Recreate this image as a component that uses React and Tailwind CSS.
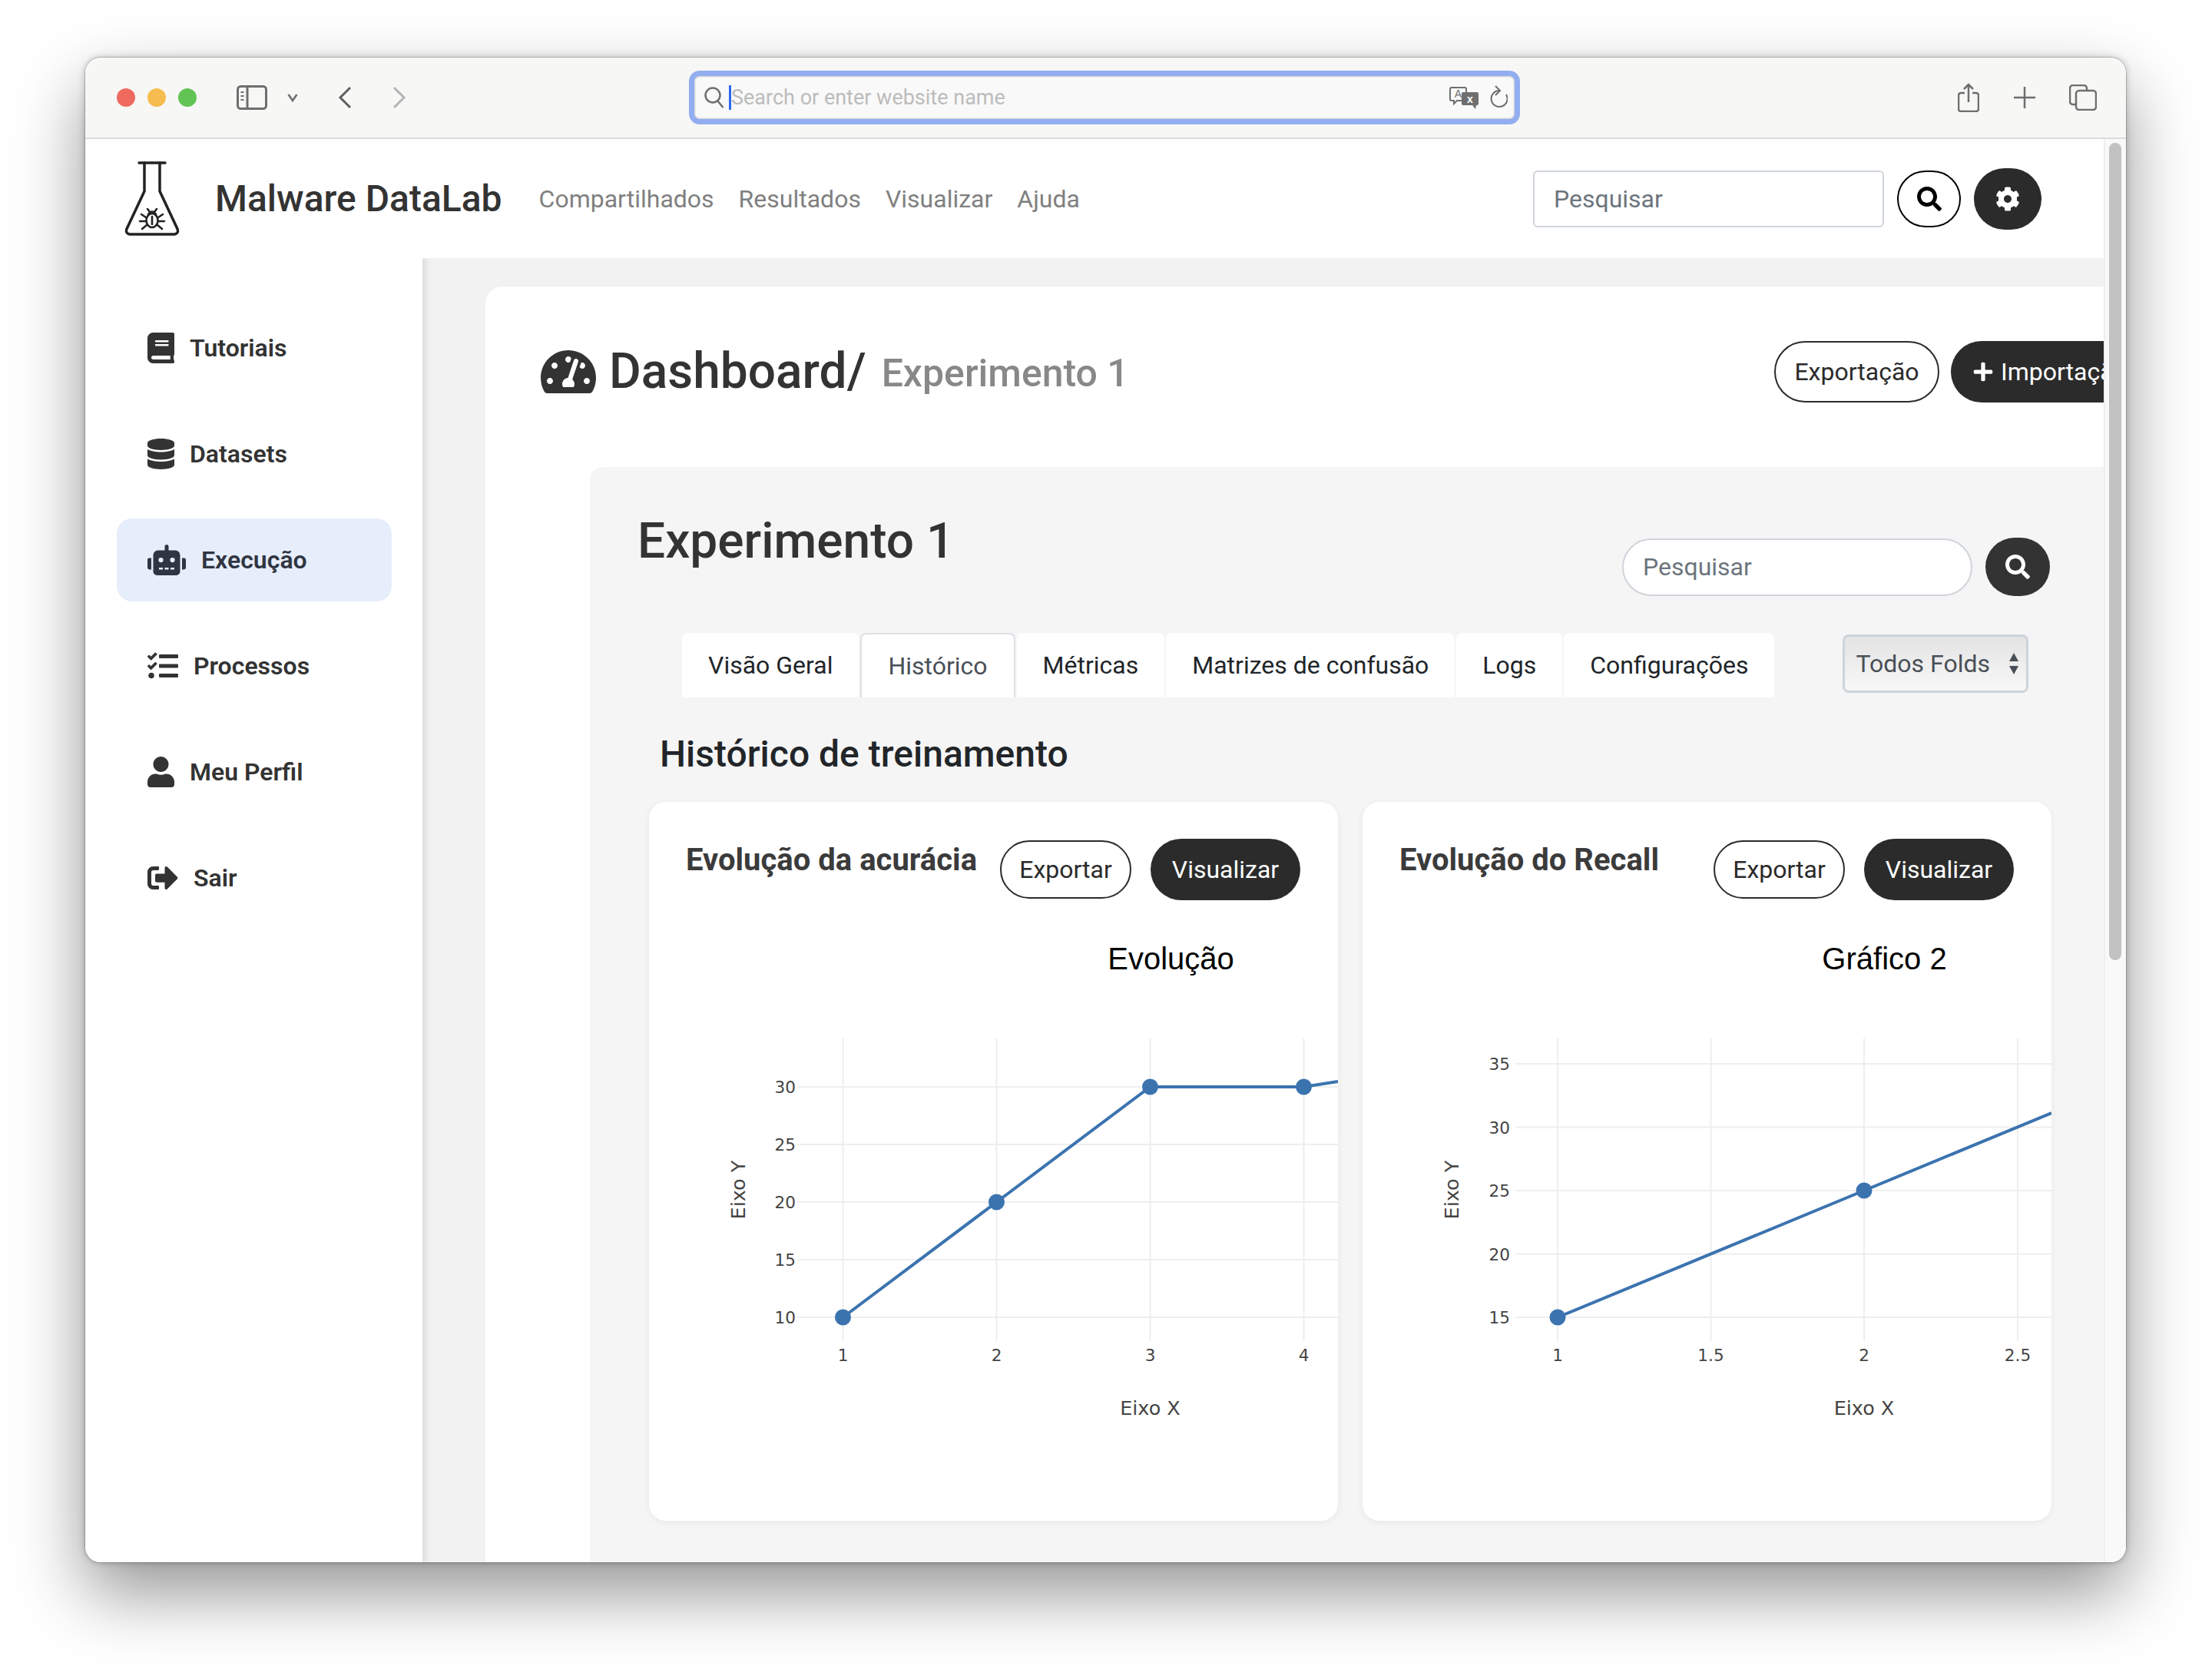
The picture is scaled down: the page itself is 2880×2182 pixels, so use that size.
import React from 'react';
import { FaBook, FaDatabase, FaRobot, FaTasks, FaUser, FaSignOutAlt, FaSearch, FaCog, FaTachometerAlt, FaPlus } from 'react-icons/fa';

const sideItems = [
  { label: 'Tutoriais', icon: FaBook, size: 'w-[35px] h-[40px]' },
  { label: 'Datasets', icon: FaDatabase, size: 'w-[35px] h-[40px]' },
  { label: 'Execução', icon: FaRobot, size: 'w-[50px] h-[40px]', active: true },
  { label: 'Processos', icon: FaTasks, size: 'w-[40px] h-[40px]' },
  { label: 'Meu Perfil', icon: FaUser, size: 'w-[35px] h-[40px]' },
  { label: 'Sair', icon: FaSignOutAlt, size: 'w-[40px] h-[40px]' },
];

const tabs = ['Visão Geral', 'Histórico', 'Métricas', 'Matrizes de confusão', 'Logs', 'Configurações'];

const chart1 = {
  title: 'Evolução',
  yLabelX: 191,
  axisYX: 117,
  gridLeft: 193,
  xs: [[252.5, '1'], [452.5, '2'], [652.5, '3'], [852.5, '4']],
  ys: [[243, '30'], [318, '25'], [393, '20'], [468, '15'], [543, '10']],
  line: '252.5,543 452.5,393 652.5,243 852.5,243 897,236',
  dots: [[252.5, 543], [452.5, 393], [652.5, 243], [852.5, 243]],
  axisX: 652.5,
};

const chart2 = {
  title: 'Gráfico 2',
  yLabelX: 192,
  axisYX: 117,
  gridLeft: 199,
  xs: [[254, '1'], [453.5, '1.5'], [653, '2'], [853, '2.5']],
  ys: [[213, '35'], [295.5, '30'], [378, '25'], [460.5, '20'], [543, '15']],
  line: '254,543 653,378 897,277',
  dots: [[254, 543], [653, 378]],
  axisX: 653,
};

function PlotChart({ data }) {
  return (
    <svg width="897" height="808" viewBox="0 0 897 808" className="block">
      <text x="679.5" y="90" textAnchor="middle" fontSize="40" fill="#000" className="font-['Liberation_Sans',sans-serif]">{data.title}</text>
      <g stroke="#eeeeee" strokeWidth="2">
        {data.xs.map(([x]) => <line key={x} x1={x} x2={x} y1="180" y2="574" />)}
        {data.ys.map(([y]) => <line key={y} x1={data.gridLeft} x2="897" y1={y} y2={y} />)}
      </g>
      <g fontSize="21.6" fill="#444" className="font-['DejaVu_Sans',sans-serif]">
        {data.xs.map(([x, t]) => <text key={x} x={x} y="600" textAnchor="middle">{t}</text>)}
        {data.ys.map(([y, t]) => <text key={y} x={data.yLabelX} y={y + 8} textAnchor="end">{t}</text>)}
      </g>
      <polyline points={data.line} fill="none" stroke="#3b73af" strokeWidth="4" />
      {data.dots.map(([x, y]) => <circle key={x} cx={x} cy={y} r="10.5" fill="#3b73af" />)}
      <g fontSize="25.5" fill="#444" className="font-['DejaVu_Sans',sans-serif]">
        <text x={data.axisX} y="670" textAnchor="middle">Eixo X</text>
        <text transform={`translate(${data.axisYX + 8} 377) rotate(-90)`} textAnchor="middle">Eixo Y</text>
      </g>
    </svg>
  );
}

function ChartCard({ title, data }) {
  return (
    <div className="w-[897px] h-[936px] bg-white rounded-[22px] overflow-hidden shadow-[0_2px_10px_rgba(0,0,0,0.06)]">
      <div className="h-[128px] pl-[48px] pr-[49px] flex items-start justify-between">
        <div className="mt-[52px] text-[40px] leading-[48px] font-bold text-[#3b3b3b] whitespace-nowrap">{title}</div>
        <div className="mt-[48px] flex items-center gap-[25px]">
          <button className="w-[171px] h-[76px] rounded-full border-2 border-[#2b2b2b] text-[32px] text-[#2b2b2b]">Exportar</button>
          <button className="w-[195px] h-[80px] rounded-full bg-[#2b2b2b] text-[32px] text-white">Visualizar</button>
        </div>
      </div>
      <PlotChart data={data} />
    </div>
  );
}

function SafariBar() {
  return (
    <div className="h-[106px] shrink-0 bg-[#f7f7f6] border-b-2 border-[#dcdcdc] flex items-center pl-[41px] pr-[38px]">
      <div className="flex items-center gap-[16px]">
        <div className="w-[24px] h-[24px] rounded-full bg-[#ee6a5f]" />
        <div className="w-[24px] h-[24px] rounded-full bg-[#f5bd4f]" />
        <div className="w-[24px] h-[24px] rounded-full bg-[#61c454]" />
      </div>
      <svg width="40" height="32" viewBox="0 0 40 32" fill="none" stroke="#6e6e6e" strokeWidth="3" className="ml-[52px]">
        <rect x="1.5" y="1.5" width="37" height="29" rx="4" />
        <path d="M14 2v28" />
        <path d="M5.5 9h4M5.5 14h4M5.5 19h4" strokeWidth="2" />
      </svg>
      <svg width="14" height="12" viewBox="0 0 14 12" fill="none" stroke="#6e6e6e" strokeWidth="2.5" className="ml-[26px]">
        <path d="M1.5 2l5.5 8 5.5-8" />
      </svg>
      <svg width="20" height="30" viewBox="0 0 20 30" fill="none" stroke="#5f5f5f" strokeWidth="3" className="ml-[51px]">
        <path d="M17 2L4 15l13 13" />
      </svg>
      <svg width="20" height="30" viewBox="0 0 20 30" fill="none" stroke="#b4b4b4" strokeWidth="3" className="ml-[51px]">
        <path d="M3 2l13 13L3 28" />
      </svg>
      <div className="ml-[367px] w-[1082px] h-[70px] shrink-0 rounded-[14px] border-[7px] border-[#92aef0] bg-[#f9f9f9] flex items-center pl-[13px] pr-[4px] shadow-[inset_0_0_0_1.5px_#d9d9d9]">
        <svg width="26" height="28" viewBox="0 0 26 28" fill="none" stroke="#6f6f6f" strokeWidth="2.5">
          <circle cx="11" cy="11" r="9.5" />
          <path d="M17.5 18.5L24.5 27" />
        </svg>
        <div className="ml-[6px] w-[3px] h-[32px] bg-[#2a66f0]" />
        <div className="text-[27px] text-[#bcbcbc] leading-none whitespace-nowrap">Search or enter website name</div>
        <svg width="38" height="30" viewBox="0 0 38 30" className="ml-auto">
          <path d="M3 2h17a2 2 0 0 1 2 2v13a2 2 0 0 1-2 2H10l-4 4v-4H3a2 2 0 0 1-2-2V4a2 2 0 0 1 2-2z" fill="none" stroke="#6f6f6f" strokeWidth="2" />
          <text x="11.5" y="15" textAnchor="middle" fontSize="14" fill="#6f6f6f" className="font-['Liberation_Sans',sans-serif]">A</text>
          <path d="M18 8h18a2 2 0 0 1 2 2v13a2 2 0 0 1-2 2h-1l-1 5-4-5H18a2 2 0 0 1-2-2V10a2 2 0 0 1 2-2z" fill="#6f6f6f" />
          <text x="27" y="22" textAnchor="middle" fontSize="14" fontWeight="700" fill="#fff" className="font-['Liberation_Sans',sans-serif]">x</text>
        </svg>
        <svg width="24" height="32" viewBox="0 0 24 32" fill="none" stroke="#6f6f6f" strokeWidth="2" className="ml-[14px] mr-[5px]">
          <path d="M13 7a10.5 10.5 0 1 0 9 5" />
          <path d="M8 1l6 6-6 6" />
        </svg>
      </div>
      <svg width="28" height="38" viewBox="0 0 28 38" fill="none" stroke="#6e6e6e" strokeWidth="2.5" className="ml-auto">
        <path d="M9 13H4a3 3 0 0 0-3 3v18a3 3 0 0 0 3 3h20a3 3 0 0 0 3-3V16a3 3 0 0 0-3-3h-5" />
        <path d="M14 25V2M8 8l6-6 6 6" />
      </svg>
      <svg width="28" height="28" viewBox="0 0 28 28" fill="none" stroke="#6e6e6e" strokeWidth="2.5" className="ml-[45px]">
        <path d="M14 0v28M0 14h28" />
      </svg>
      <svg width="36" height="34" viewBox="0 0 36 34" fill="none" stroke="#6e6e6e" strokeWidth="2.5" className="ml-[44px]">
        <rect x="9" y="8" width="26" height="25" rx="4" />
        <path d="M9 26H5a4 4 0 0 1-4-4V5a4 4 0 0 1 4-4h14a4 4 0 0 1 4 4v3" />
      </svg>
    </div>
  );
}

function Logo() {
  return (
    <svg width="72" height="97" viewBox="0 0 72 97" fill="none" stroke="#222" strokeWidth="3.5" strokeLinecap="round" strokeLinejoin="round" className="shrink-0">
      <path d="M19 2h34" />
      <path d="M26 2v37L3 88q-2 6 4 7h58q6-1 4-7L46 39V2" />
      <g strokeWidth="2.6">
        <ellipse cx="36" cy="77" rx="7.5" ry="9" />
        <path d="M36 72v10" />
        <path d="M31 69q5-7 10 0" />
        <path d="M30 62l3 4M42 62l-3 4" />
        <path d="M28 73l-6-4M28 78h-8M29 83l-6 5M44 73l6-4M44 78h8M43 83l6 5" />
      </g>
    </svg>
  );
}

export default function App() {
  return (
    <div className="w-[2880px] h-[2182px] bg-white overflow-hidden pt-[75px] pl-[111px] font-['Roboto',sans-serif]">
      <div className="w-[2657px] h-[1959px] rounded-[20px] overflow-hidden flex flex-col bg-white shadow-[0_40px_90px_rgba(0,0,0,0.42),0_0_10px_rgba(0,0,0,0.25),0_0_0_1px_rgba(0,0,0,0.18)]">
        <SafariBar />
        <div className="flex-1 flex min-h-0">
          <div className="w-[2628px] flex flex-col min-h-0">
            {/* Navbar */}
            <div className="h-[155px] shrink-0 bg-white flex items-center pl-[51px] pr-[81px] relative z-10">
              <Logo />
              <div className="ml-[46px] text-[48px] font-medium text-[#333] whitespace-nowrap">Malware DataLab</div>
              <div className="ml-[48px] flex items-center gap-[32px] text-[32px] text-[#808080]">
                <span>Compartilhados</span>
                <span>Resultados</span>
                <span>Visualizar</span>
                <span>Ajuda</span>
              </div>
              <input placeholder="Pesquisar" className="ml-auto w-[457px] h-[74px] rounded-[6px] border-2 border-[#ced4da] bg-white px-[25px] text-[32px] placeholder:text-[#6c757d] outline-none" />
              <button className="ml-[17px] w-[83px] h-[74px] rounded-full border-2 border-black flex items-center justify-center">
                <FaSearch className="text-[32px] text-black" />
              </button>
              <button className="ml-[17px] w-[88px] h-[80px] rounded-full bg-[#2b2b2b] flex items-center justify-center">
                <FaCog className="text-[32px] text-white" />
              </button>
            </div>

            <div className="flex-1 flex min-h-0">
              {/* Sidebar */}
              <div className="w-[439px] shrink-0 bg-white pt-[63px] pl-[41px] flex flex-col gap-[30px] relative shadow-[4px_0_8px_rgba(0,0,0,0.1)]">
                {sideItems.map(item => {
                  const Icon = item.icon;
                  return (
                    <div key={item.label} className={`w-[358px] h-[108px] rounded-[20px] pl-[40px] flex items-center gap-[20px] text-[32px] font-semibold ${item.active ? 'bg-[#e7eefb] text-[#2f3542]' : 'text-[#333]'}`}>
                      <Icon className={`${item.size} shrink-0`} />
                      <span>{item.label}</span>
                    </div>
                  );
                })}
              </div>

              {/* Content */}
              <div className="flex-1 bg-[#f2f2f2] pt-[37px] pl-[82px] overflow-hidden min-w-0">
                <div className="w-[2107px] h-[1800px] bg-white rounded-tl-[22px]">
                  <div className="h-[235px] pb-[14px] pl-[72px] flex items-center whitespace-nowrap">
                    <FaTachometerAlt className="w-[72px] h-[64px] text-[#333] shrink-0" />
                    <span className="ml-[17px] text-[64px] font-medium text-[#333]">Dashboard/</span>
                    <span className="ml-[20px] mt-[6px] text-[50px] font-medium text-[#888]">Experimento 1</span>
                    <button className="ml-auto w-[215px] h-[80px] rounded-full border-2 border-[#2b2b2b] text-[32px] text-[#2b2b2b] shrink-0">Exportação</button>
                    <button className="ml-[15px] w-[199px] h-[80px] rounded-l-full bg-[#2b2b2b] text-[32px] text-white flex items-center pl-[28px] gap-[9px] overflow-hidden shrink-0">
                      <FaPlus className="text-[28px] shrink-0" />
                      <span>Importação</span>
                    </button>
                  </div>

                  {/* Experiment panel */}
                  <div className="ml-[136px] w-[1971px] h-[1600px] bg-[#f5f5f5] rounded-tl-[16px]">
                    <div className="h-[216px] pt-[92px] pl-[62px] pr-[70px] flex items-start justify-between">
                      <div className="text-[64px] leading-[72px] font-medium text-[#333] -mt-[31px]">Experimento 1</div>
                      <div className="flex items-center gap-[17px]">
                        <input placeholder="Pesquisar" className="w-[456px] h-[75px] rounded-full border-2 border-[#ced4da] bg-white px-[25px] text-[32px] placeholder:text-[#6c757d] outline-none" />
                        <button className="w-[84px] h-[76px] rounded-full bg-[#333] flex items-center justify-center">
                          <FaSearch className="text-[32px] text-white" />
                        </button>
                      </div>
                    </div>

                    <div className="pl-[120px] flex items-center">
                      <div className="flex gap-[2px]">
                        {tabs.map(t => (
                          <div key={t} className={`h-[84px] px-[34px] rounded-t-[8px] bg-white text-[32px] flex items-center whitespace-nowrap ${t === 'Histórico' ? 'border-2 border-b-0 border-[#dee2e6] text-[#495057]' : 'text-[#212529]'}`}>{t}</div>
                        ))}
                      </div>
                      <div className="ml-[89px] w-[242px] h-[76px] -mt-[4px] rounded-[8px] border-[3px] border-[#ced4da] bg-gradient-to-b from-[#e3e3e3] to-[#f8f8f8] flex items-center justify-between pl-[14px] pr-[9px] text-[32px] text-[#495057]">
                        <span>Todos Folds</span>
                        <svg width="14" height="30" viewBox="0 0 14 30" fill="#495057">
                          <path d="M7 1l6 11H1zM7 29L1 18h12z" />
                        </svg>
                      </div>
                    </div>

                    <div className="pl-[91px] mt-[44px] h-[60px] text-[48px] leading-[60px] font-medium text-[#212529]">Histórico de treinamento</div>

                    <div className="mt-[32px] pl-[77px] flex gap-[32px]">
                      <ChartCard title="Evolução da acurácia" data={chart1} />
                      <ChartCard title="Evolução do Recall" data={chart2} />
                    </div>
                  </div>
                </div>
              </div>
            </div>
          </div>

          {/* Scroll gutter */}
          <div className="w-[29px] shrink-0 bg-[#f9f9f9] border-l-2 border-[#eeeeee] pl-[5px] pt-[5px]">
            <div className="w-[16px] h-[1064px] rounded-full bg-[#c2c2c2]" />
          </div>
        </div>
      </div>
    </div>
  );
}
